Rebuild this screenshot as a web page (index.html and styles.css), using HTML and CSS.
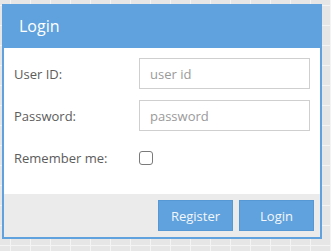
FILE: index.html
```html
<!DOCTYPE html>
<html>
<head>
<meta charset="utf-8">
<link rel="stylesheet" href="styles.css">
</head>
<body>
<div class="panel">
  <div class="header">Login</div>
  <div class="body">
    <div class="row">
      <label class="label">User ID:</label>
      <input class="input" type="text" placeholder="user id">
    </div>
    <div class="row">
      <label class="label">Password:</label>
      <input class="input" type="password" placeholder="password">
    </div>
    <div class="row">
      <label class="label">Remember me:</label>
      <input class="check" type="checkbox">
    </div>
  </div>
  <div class="footer">
    <button class="btn">Register</button>
    <button class="btn">Login</button>
  </div>
</div>
</body>
</html>
```
FILE: styles.css
```css
html, body {
  margin: 0;
  padding: 0;
}
body {
  width: 331px;
  height: 251px;
  background-color: #e6e6e6;
  background-image:
    linear-gradient(to right, transparent 10px, #f4f4f4 10px, #f4f4f4 11px, transparent 11px),
    linear-gradient(to bottom, transparent 5px, #f4f4f4 5px, #f4f4f4 6px, transparent 6px);
  background-size: 20px 20px;
  font-family: "Open Sans", "Liberation Sans", sans-serif;
  overflow: hidden;
}
.panel {
  box-sizing: border-box;
  margin: 4px 0 0 2px;
  width: 320px;
  border: 2px solid #5fa2dd;
  border-top: 0;
  background: #fff;
}
.header {
  box-sizing: border-box;
  height: 44px;
  margin: 0 -2px;
  background: #5fa2dd;
  color: #fff;
  font-size: 16px;
  padding: 12px 0 0 17px;
  line-height: 20px;
}
.body {
  padding: 10px 10px 21px 10px;
  display: flex;
  flex-direction: column;
  gap: 11px;
}
.row {
  display: flex;
  align-items: center;
  height: 31px;
}
.label {
  width: 125px;
  font-size: 13px;
  color: #5c5c5c;
}
.input {
  box-sizing: border-box;
  width: 171px;
  height: 31px;
  border: 1px solid #cfcfcf;
  border-radius: 0;
  padding: 0 10px;
  font-family: "Open Sans", "Liberation Sans", sans-serif;
  font-size: 13px;
  color: #555;
  outline: none;
}
.input::placeholder {
  color: #9a9a9a;
}
.check {
  appearance: none;
  -webkit-appearance: none;
  box-sizing: border-box;
  margin: 0;
  width: 14px;
  height: 14px;
  border: 1.5px solid #7a7a7a;
  border-radius: 3px;
  background: #fff;
}
.footer {
  background: #ebebeb;
  padding: 6px;
  display: flex;
  justify-content: flex-end;
  gap: 6px;
}
.btn {
  box-sizing: border-box;
  width: 75px;
  height: 31px;
  background: #5fa2dd;
  border: 1px solid #5598d4;
  color: #f4f6fa;
  font-family: "Open Sans", "Liberation Sans", sans-serif;
  font-size: 13px;
  padding: 0;
  margin: 0;
}
```
